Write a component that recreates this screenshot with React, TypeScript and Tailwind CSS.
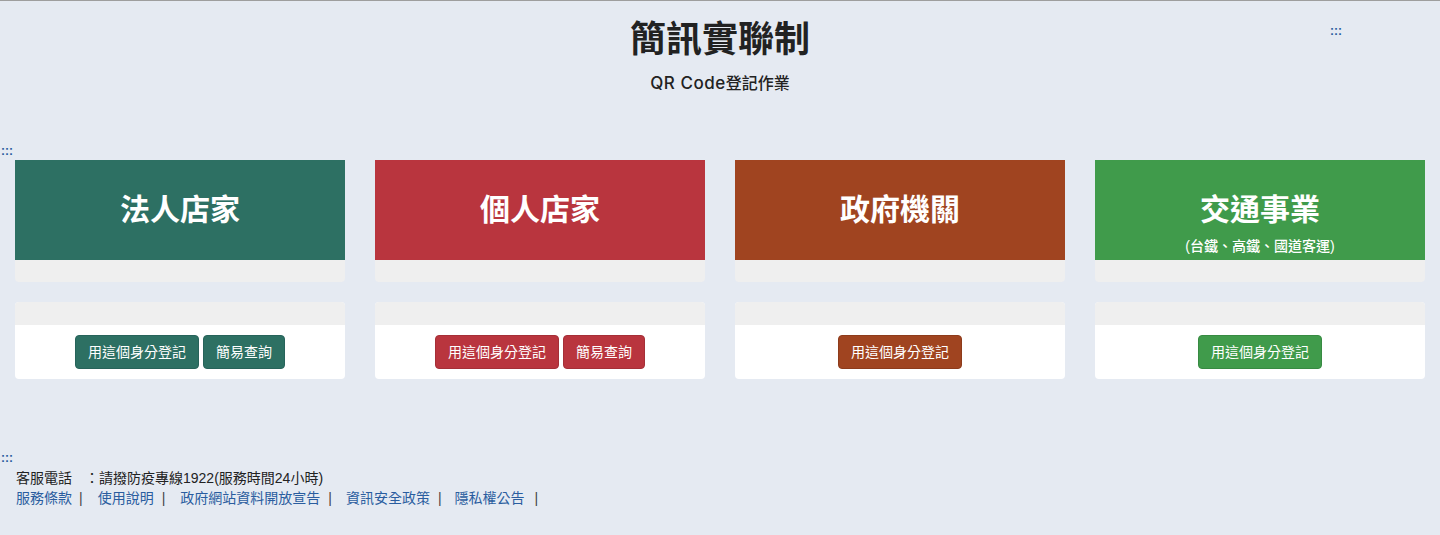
import React from "react";

const font = { fontFamily: '"Liberation Sans", "Noto Sans CJK TC", sans-serif' };

type Card = {
  title: string;
  sub?: string;
  head: string;
  btn: string;
  query: boolean;
};

const cards: Card[] = [
  { title: "法人店家", head: "bg-[#2d7063]", btn: "bg-[#2d7063] border-[#27635a]", query: true },
  { title: "個人店家", head: "bg-[#b9353e]", btn: "bg-[#b9353e] border-[#a52f37]", query: true },
  { title: "政府機關", head: "bg-[#a04420]", btn: "bg-[#a04420] border-[#8d3b1b]", query: false },
  { title: "交通事業", sub: "(台鐵、高鐵、國道客運)", head: "bg-[#409b4b]", btn: "bg-[#409b4b] border-[#378a42]", query: false },
];

const links = [
  { t: "服務條款", sep: "ml-[7px] mr-[15px]" },
  { t: "使用說明", sep: "ml-[8px] mr-[15px]" },
  { t: "政府網站資料開放宣告", sep: "ml-[8px] mr-[14px]" },
  { t: "資訊安全政策", sep: "ml-[8px] mr-[13px]" },
  { t: "隱私權公告", sep: "ml-[10px] mr-[0px]" },
];

function Btn({ cls, children }: { cls: string; children: React.ReactNode }) {
  return (
    <button className={`${cls} border text-white text-[14px] leading-[20px] px-[12px] py-[6px] rounded-[4px] h-[34px]`}>
      {children}
    </button>
  );
}

function Skip() {
  return <span className="text-[12px] leading-[12px] font-bold text-[#2a5d9f]">:::</span>;
}

export default function App() {
  return (
    <div style={font} className="min-h-[535px] bg-[#e5eaf2] border-t border-[#9e9e9e] text-[#222]">
      <div className="relative">
        <a className="absolute left-[1330px] top-[24px] text-[12px] leading-[12px]">
          <Skip />
        </a>
        <h1 className="pt-[21px] text-center text-[36px] leading-[36px] font-bold text-[#222]">簡訊實聯制</h1>
        <div className="mt-[17px] text-center text-[16px] leading-[16px] font-medium text-[#222]">
          <span className="text-[17px] tracking-[0.03em]" style={{ fontFamily: 'Inter, "Noto Sans CJK TC", sans-serif' }}>
            QR Code
          </span>
          登記作業
        </div>
      </div>

      <div className="mt-[53px] pl-[1px] text-[12px] leading-[12px]">
        <Skip />
      </div>

      <div className="mt-[3px] grid grid-cols-4 gap-[30px] px-[15px]">
        {cards.map((c) => (
          <div key={c.title} className="flex flex-col">
            <div className="rounded-b-[4px] bg-[#efefef] overflow-hidden">
              <div className={`${c.head} h-[100px] pt-[36px] text-center text-white`}>
                <div className="text-[30px] leading-[28px] font-bold">{c.title}</div>
                {c.sub && <div className="mt-[14px] text-[14px] leading-[16px] font-medium">{c.sub}</div>}
              </div>
              <div className="h-[22px]" />
            </div>
            <div className="mt-[20px] rounded-[4px] overflow-hidden bg-white">
              <div className="h-[23px] bg-[#efefef]" />
              <div className="flex justify-center gap-[4px] py-[10px]">
                <Btn cls={c.btn}>用這個身分登記</Btn>
                {c.query && <Btn cls={c.btn}>簡易查詢</Btn>}
              </div>
            </div>
          </div>
        ))}
      </div>

      <div className="mt-[73px] pl-[1px] text-[12px] leading-[12px]">
        <Skip />
      </div>
      <div className="mt-[4px] pl-[16px] text-[14px] leading-[20px]">
        <div className="text-[#222]">
          <span className="inline-block w-[69px]">客服電話</span>：請撥防疫專線1922(服務時間24小時)
        </div>
        <div className="flex items-center">
          {links.map((l) => (
            <React.Fragment key={l.t}>
              <a className="text-[#2a5d9f]">{l.t}</a>
              <span className={`${l.sep} text-[#444]`}>|</span>
            </React.Fragment>
          ))}
        </div>
      </div>
    </div>
  );
}
